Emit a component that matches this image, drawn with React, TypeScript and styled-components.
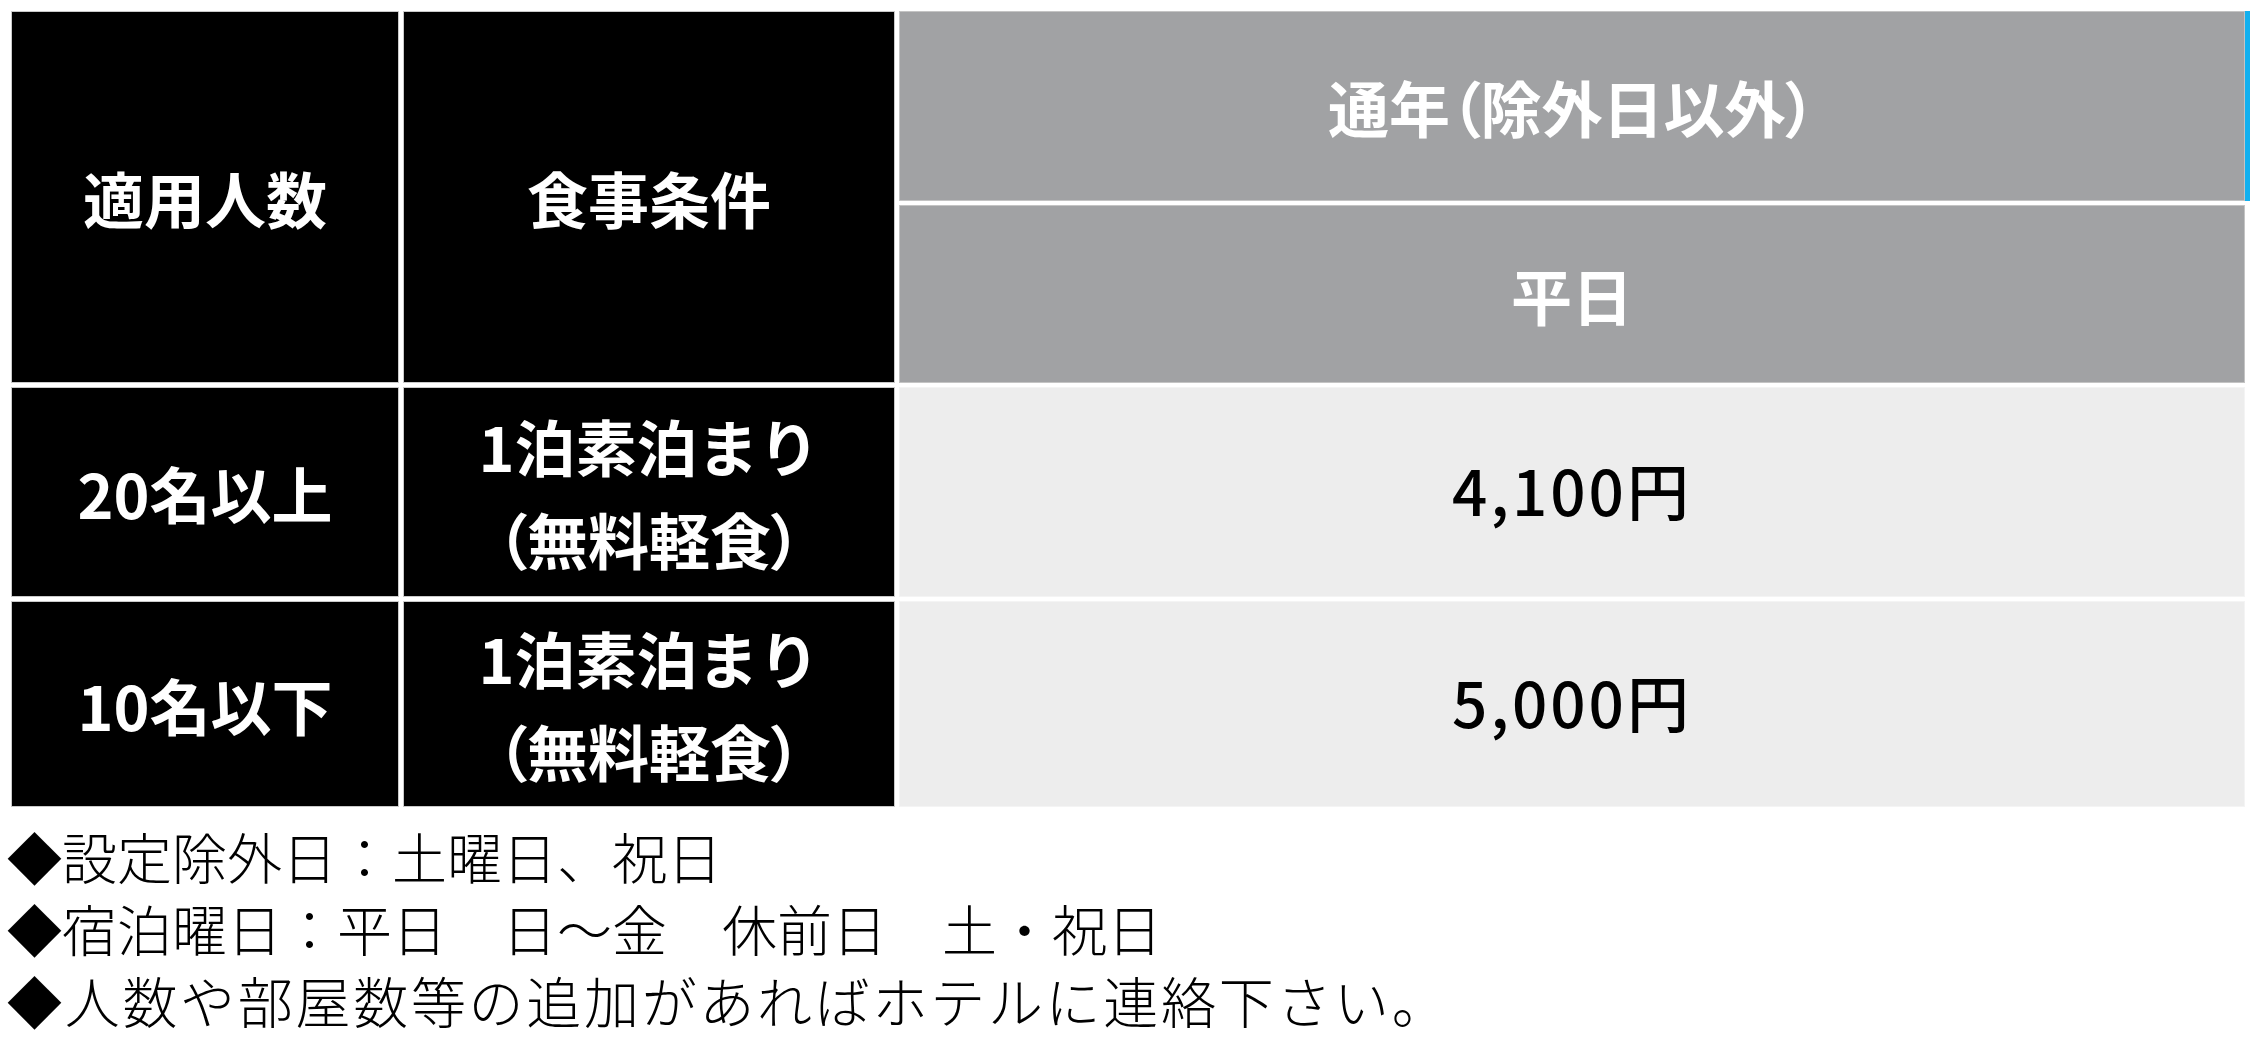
import * as React from 'react'
import styled, { createGlobalStyle, css } from 'styled-components'

type Tone = 'dark' | 'mid' | 'light'

const rows = [
  { people: '20名以上', price: '4,100円' },
  { people: '10名以下', price: '5,000円' },
]

const notes = [
  { text: '設定除外日：土曜日、祝日', spread: 0 },
  { text: '宿泊曜日：平日　日～金　休前日　土・祝日', spread: 0 },
  { text: '人数や部屋数等の追加があればホテルに連絡下さい。', spread: 2.7 },
]

const App: React.FC = () => {
  return (
    <Page>
      <GlobalStyle />
      <Table>
        <Cell tone="dark" $rowSpan={2}>
          <Label>適用人数</Label>
        </Cell>
        <Cell tone="dark" $rowSpan={2}>
          <Label>食事条件</Label>
        </Cell>
        <Cell tone="mid" $accent>
          <Label>
            通年<Paren>（</Paren>除外日以外<Paren>）</Paren>
          </Label>
        </Cell>
        <Cell tone="mid">
          <Label>平日</Label>
        </Cell>

        {rows.map((row) => (
          <React.Fragment key={row.people}>
            <Cell tone="dark">
              <Label>{row.people}</Label>
            </Cell>
            <Cell tone="dark">
              <Label>
                1泊素泊まり
                <br />
                <Paren>（</Paren>無料軽食<Paren>）</Paren>
              </Label>
            </Cell>
            <Cell tone="light">
              <Price>{row.price}</Price>
            </Cell>
          </React.Fragment>
        ))}
      </Table>

      <Notes>
        {notes.map((note) => (
          <Note key={note.text} $spread={note.spread}>
            ◆{note.text}
          </Note>
        ))}
      </Notes>
    </Page>
  )
}

export default App

const GlobalStyle = createGlobalStyle`
  html, body {
    margin: 0;
    padding: 0;
    background: #fff;
  }

  body {
    font-family: "Noto Sans CJK JP", "Noto Sans", sans-serif;
  }
`

const Page = styled.div`
  width: 2250px;
  padding: 11px 0 0 11px;
  box-sizing: border-box;
  overflow: hidden;
`

const Table = styled.div`
  display: grid;
  grid-template-columns: 388px 492px 1346px;
  grid-template-rows: 190px 178px 210px 206px;
  gap: 4px;
`

const tones = {
  dark: css`
    background: #000;
    color: #fff;
    border-color: #c9c9c9;
  `,
  mid: css`
    background: #a1a2a4;
    color: #fff;
    border-color: #c4c4c4;
  `,
  light: css`
    background: #ededed;
    color: #000;
    border-color: #f4f4f4;
  `,
}

const Cell = styled.div<{ tone: Tone; $rowSpan?: number; $accent?: boolean }>`
  display: flex;
  align-items: center;
  justify-content: center;
  box-sizing: border-box;
  border: 1px solid;
  text-align: center;
  grid-row: span ${(p) => p.$rowSpan || 1};
  ${(p) => tones[p.tone]}
  ${(p) =>
    p.$accent &&
    css`
      box-shadow: 5px 0 0 #12b0ef;
    `}
`

const Label = styled.div`
  font-size: 61px;
  font-weight: 700;
  line-height: 93px;
`

const Paren = styled.span`
  font-feature-settings: 'palt';
`

const Price = styled.div`
  font-size: 62px;
  font-weight: 500;
  letter-spacing: 3px;
  margin-top: -6px;
`

const Notes = styled.div`
  margin-top: 12px;
  margin-left: -4px;
`

const Note = styled.div<{ $spread: number }>`
  font-size: 55px;
  line-height: 72px;
  font-weight: 300;
  color: #000;
  white-space: nowrap;
  letter-spacing: ${(p) => p.$spread}px;
`
